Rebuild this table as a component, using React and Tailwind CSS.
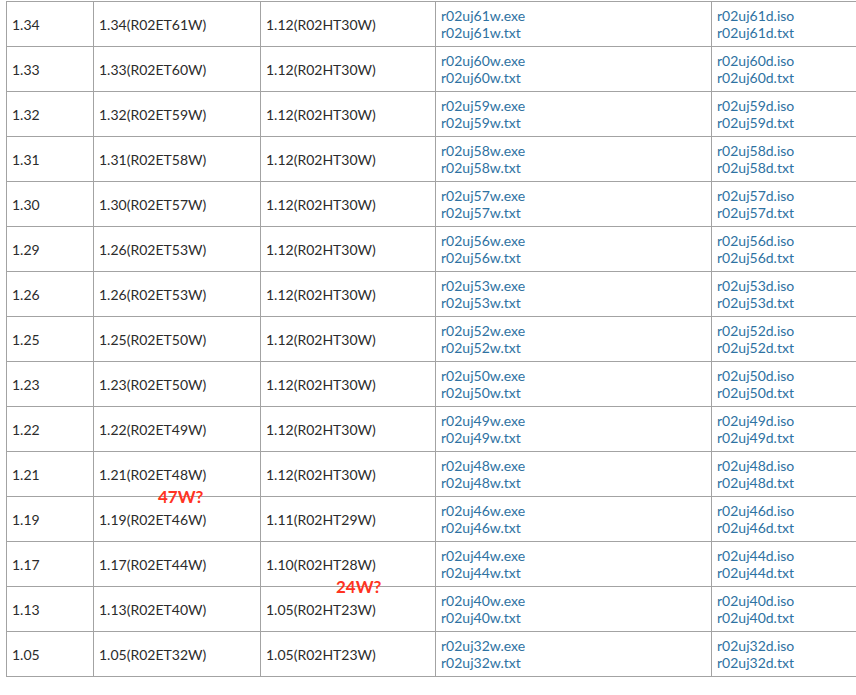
const rows = [
  ['1.34', '1.34(R02ET61W)', '1.12(R02HT30W)', '61'],
  ['1.33', '1.33(R02ET60W)', '1.12(R02HT30W)', '60'],
  ['1.32', '1.32(R02ET59W)', '1.12(R02HT30W)', '59'],
  ['1.31', '1.31(R02ET58W)', '1.12(R02HT30W)', '58'],
  ['1.30', '1.30(R02ET57W)', '1.12(R02HT30W)', '57'],
  ['1.29', '1.26(R02ET53W)', '1.12(R02HT30W)', '56'],
  ['1.26', '1.26(R02ET53W)', '1.12(R02HT30W)', '53'],
  ['1.25', '1.25(R02ET50W)', '1.12(R02HT30W)', '52'],
  ['1.23', '1.23(R02ET50W)', '1.12(R02HT30W)', '50'],
  ['1.22', '1.22(R02ET49W)', '1.12(R02HT30W)', '49'],
  ['1.21', '1.21(R02ET48W)', '1.12(R02HT30W)', '48', '47W?', null],
  ['1.19', '1.19(R02ET46W)', '1.11(R02HT29W)', '46'],
  ['1.17', '1.17(R02ET44W)', '1.10(R02HT28W)', '44', null, '24W?'],
  ['1.13', '1.13(R02ET40W)', '1.05(R02HT23W)', '40'],
  ['1.05', '1.05(R02ET32W)', '1.05(R02HT23W)', '32'],
];

const cell = 'relative h-[45px] border-r border-b border-[#a3a3a3] pl-[5px] flex items-center shrink-0';
const note = 'absolute -bottom-[9px] z-10 text-[17px] font-bold text-[#ff3322] leading-none';

export default function App() {
  return (
    <div className="w-[856px] h-[695px] overflow-hidden bg-white" style={{ fontFamily: 'Lato, "Open Sans", sans-serif' }}>
      <div className="ml-[6px] mt-[1px] w-[920px] border-l border-t border-[#a3a3a3] text-[14px] text-[#2b2b2b]">
        {rows.map(([ver, et, ht, n, noteEt, noteHt]) => (
          <div key={ver} className="flex">
            <div className={`${cell} w-[87px]`}>{ver}</div>
            <div className={`${cell} w-[167px]`}>
              {et}
              {noteEt && <span className={`${note} left-[64px]`}>{noteEt}</span>}
            </div>
            <div className={`${cell} w-[175px]`}>
              {ht}
              {noteHt && <span className={`${note} left-[75px]`}>{noteHt}</span>}
            </div>
            <div className={`${cell} w-[276px]`}>
              <div className="flex flex-col leading-[17px] text-[#2e72a2]">
                <a>r02uj{n}w.exe</a>
                <a>r02uj{n}w.txt</a>
              </div>
            </div>
            <div className={`${cell} w-[200px]`}>
              <div className="flex flex-col leading-[17px] text-[#2e72a2]">
                <a>r02uj{n}d.iso</a>
                <a>r02uj{n}d.txt</a>
              </div>
            </div>
          </div>
        ))}
      </div>
    </div>
  );
}
